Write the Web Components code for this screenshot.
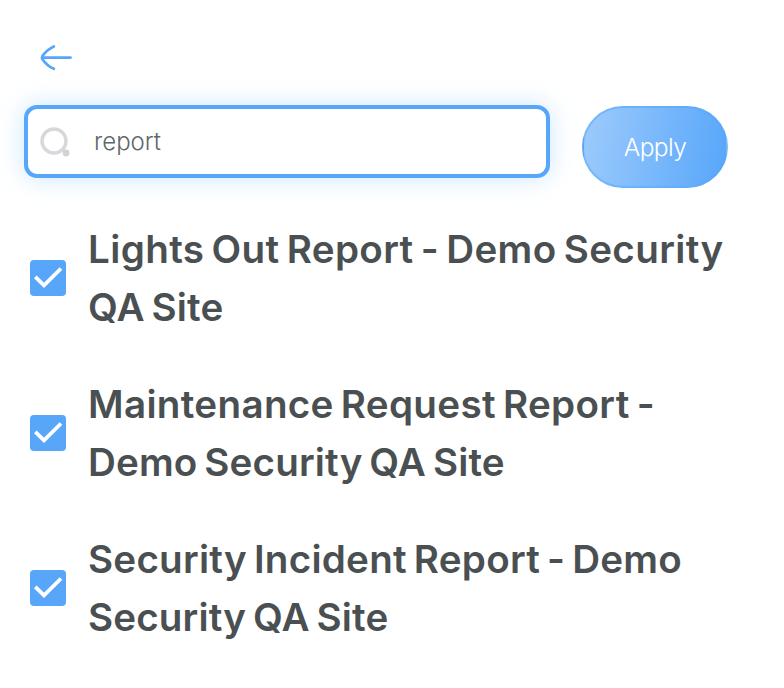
<!DOCTYPE html>
<html lang="en">
<head>
<meta charset="utf-8">
<title>Reports</title>
<style>
    body {
        margin: 0;
        background: #fff;
    }
</style>
</head>
<body>
<report-picker>
    <back-button slot="back"></back-button>
    <search-field slot="search">report</search-field>
    <apply-button slot="action">Apply</apply-button>
    <check-item checked style="--lead-tracking: 0.38px">Lights Out Report - Demo Security QA Site</check-item>
    <check-item checked style="--lead-tracking: 0.33px">Maintenance Request Report - Demo Security QA Site</check-item>
    <check-item checked style="--lead-tracking: 0.25px">Security Incident Report - Demo Security QA Site</check-item>
</report-picker>

<script>
class BaseElement extends HTMLElement {
    render(html) {
        const template = document.createElement('template');
        template.innerHTML = html;
        this.attachShadow({mode: 'open'}).appendChild(template.content.cloneNode(true));
    }
}

class ReportPickerElement extends BaseElement {
    constructor() {
        super();
        this.render(`<style>
            :host {
                --accent: #57a6fa;
                --ink: #4a5052;
                display: flex;
                flex-direction: column;
                box-sizing: border-box;
                width: 784px;
                height: 688px;
                padding: 44px 40px 0 24px;
                overflow: hidden;
                font-family: Inter, "Liberation Sans", sans-serif;
                color: var(--ink);
            }
            .bar {
                display: flex;
                align-items: flex-start;
                gap: 32px;
                margin-top: 33px;
            }
            .list {
                display: flex;
                flex-direction: column;
                gap: 39px;
                margin-top: 32px;
            }
        </style>
        <slot name="back"></slot>
        <div class="bar"><slot name="search"></slot><slot name="action"></slot></div>
        <div class="list"><slot></slot></div>`);
    }
}

class BackButtonElement extends BaseElement {
    constructor() {
        super();
        this.render(`<style>
            :host {
                display: block;
                width: 34px;
                height: 28px;
                margin-left: 15px;
                cursor: pointer;
            }
            svg {
                display: block;
                fill: none;
                stroke: var(--accent);
                stroke-width: 2.8;
                stroke-linecap: round;
                stroke-linejoin: round;
            }
        </style>
        <svg width="34" height="28" viewBox="0 0 34 28">
            <path d="M31.5 13.6H4"/>
            <path d="M14.8 2.4C10 4.6 6 8.3 3.5 12Q2.5 13.6 3.5 15.2C6 19 10 22.7 14.8 24.8"/>
        </svg>`);
    }
}

class SearchFieldElement extends BaseElement {
    constructor() {
        super();
        this.render(`<style>
            :host {
                display: flex;
                align-items: center;
                box-sizing: border-box;
                flex: 0 0 526px;
                height: 73px;
                padding-left: 11px;
                border: 4px solid var(--accent);
                border-radius: 13px;
                background: #fff;
                box-shadow: 0 0 24px rgba(87, 176, 250, 0.3);
                font-size: 24px;
                font-weight: 300;
                line-height: 32px;
                color: #5c6668;
            }
            svg {
                flex: none;
                margin-right: 23px;
            }
        </style>
        <svg width="32" height="32" viewBox="0 0 32 32">
            <circle cx="15" cy="15" r="12" fill="none" stroke="#d6d8dc" stroke-width="3.4"/>
            <circle cx="27" cy="27" r="3.4" fill="#d0d2d6"/>
        </svg>
        <span><slot></slot></span>`);
    }
}

class ApplyButtonElement extends BaseElement {
    constructor() {
        super();
        this.render(`<style>
            :host {
                display: flex;
                align-items: center;
                justify-content: center;
                box-sizing: border-box;
                width: 146px;
                height: 82px;
                margin-top: 1px;
                border: 2px solid rgba(87, 166, 250, 0.5);
                border-radius: 41px;
                background: linear-gradient(99deg, #9dcbfc, #57a6fa);
                font-size: 24.5px;
                font-weight: 300;
                line-height: 32px;
                letter-spacing: -0.6px;
                color: #fff;
                cursor: pointer;
            }
        </style><span><slot></slot></span>`);
    }
}

class CheckItemElement extends BaseElement {
    constructor() {
        super();
        this.render(`<style>
            :host {
                display: flex;
                align-items: center;
                gap: 22px;
                padding-left: 6px;
            }
            .box {
                flex: none;
                width: 36px;
                height: 36px;
                border-radius: 4px;
                background: var(--accent);
            }
            svg {
                display: block;
                visibility: hidden;
            }
            :host([checked]) svg {
                visibility: visible;
            }
            .label {
                width: 650px;
                font-size: 38.6px;
                font-weight: 600;
                line-height: 58px;
                letter-spacing: 0.15px;
                word-spacing: -3px;
            }
            .label::first-line {
                letter-spacing: var(--lead-tracking, 0.15px);
            }
        </style>
        <div class="box">
            <svg width="36" height="36" viewBox="0 0 36 36">
                <path d="M5.3 16.8L14 25.4L31 8.5" fill="none" stroke="#fff" stroke-width="3.8"/>
            </svg>
        </div>
        <div class="label"><slot></slot></div>`);
    }
}

customElements.define('report-picker', ReportPickerElement);
customElements.define('back-button', BackButtonElement);
customElements.define('search-field', SearchFieldElement);
customElements.define('apply-button', ApplyButtonElement);
customElements.define('check-item', CheckItemElement);
</script>
</body>
</html>
